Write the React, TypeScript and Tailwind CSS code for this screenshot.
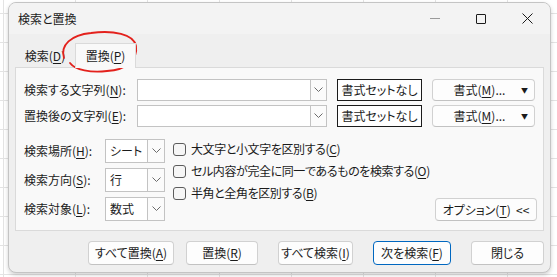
import { ReactNode } from 'react';

// Small chevron used in the combo boxes
function Chevron() {
    return (
        <svg width="9" height="6" viewBox="0 0 9 6" className="text-[#6b6b6b]">
            <polyline points="0.5,0.5 4.5,4.5 8.5,0.5" fill="none" stroke="currentColor" strokeWidth="1" />
        </svg>
    );
}

function Combo({ value, width, height, arrowW }: { value?: string; width: string; height: string; arrowW: string }) {
    return (
        <div className={`${width} ${height} flex bg-white border border-[#c3c3c3]`}>
            <div className="flex-1 flex items-center pl-[4px] text-[12px] text-[#1b1b1b]">{value}</div>
            <div className={`${arrowW} flex items-center justify-center border-l border-[#c3c3c3] bg-[#fbfbfb]`}>
                <Chevron />
            </div>
        </div>
    );
}

function Key({ children }: { children: ReactNode }) {
    return <u className="underline underline-offset-[2px] decoration-1">{children}</u>;
}

function Btn({ children, className = '' }: { children: ReactNode; className?: string }) {
    return (
        <div className={`h-[24px] flex items-center justify-center whitespace-nowrap rounded-[4px] border border-[#d1d1d1] border-b-[#c2c2c2] bg-[#fdfdfd] text-[12px] text-[#1b1b1b] ${className}`}>
            {children}
        </div>
    );
}

function CheckRow({ children }: { children: ReactNode }) {
    return (
        <div className="h-[22px] flex items-center gap-[5px] whitespace-nowrap">
            <div className="w-[13px] h-[13px] rounded-[3px] border border-[#5c5c5c] bg-[#f6f6f6]" />
            <span className="text-[12px] text-[#1b1b1b] tracking-[-0.4px]">{children}</span>
        </div>
    );
}

export default function App() {
    return (
        <div className="relative w-[557px] h-[277px] overflow-hidden bg-white pl-[8px] pt-[2px] font-['Noto_Sans_CJK_JP','Noto_Sans',sans-serif] [font-feature-settings:'palt'] bg-[linear-gradient(to_right,#e3e3e3_1px,transparent_1px),linear-gradient(to_bottom,#e3e3e3_1px,transparent_1px)] [background-size:72px_29px] [background-position:3px_13px]">
            <div className="relative w-[543px] h-[271px] flex flex-col rounded-[8px] border border-[#c4c4c4] bg-[#efefef] shadow-[0_2px_4px_rgba(0,0,0,0.18)] overflow-hidden">

                {/* Title bar */}
                <div className="h-[31px] flex items-center bg-[#f3f3f3] pl-[9px]">
                    <span className="text-[12px] text-[#1b1b1b]">検索と置換</span>
                    <div className="ml-auto flex items-center h-full">
                        <div className="w-[46px] flex justify-center">
                            <div className="w-[10px] h-px bg-[#9a9a9a]" />
                        </div>
                        <div className="w-[46px] flex justify-center">
                            <div className="w-[10px] h-[10px] border border-[#1b1b1b] rounded-[1px]" />
                        </div>
                        <div className="w-[46px] flex justify-center">
                            <svg width="11" height="11" viewBox="0 0 11 11">
                                <path d="M0.5 0.5 L10.5 10.5 M10.5 0.5 L0.5 10.5" stroke="#1b1b1b" strokeWidth="1" />
                            </svg>
                        </div>
                    </div>
                </div>

                <div className="flex flex-col px-[6px] pt-[8px]">
                    {/* Tabs */}
                    <div className="flex items-end h-[25px]">
                        <div className="w-[60px] h-[22px] flex items-center justify-center text-[12px] text-[#1b1b1b]">
                            検索(<Key>D</Key>)
                        </div>
                        <div className="w-[61px] h-[25px] -mb-px relative z-10 flex items-center justify-center bg-[#f9f9f9] border border-b-0 border-[#dadada] text-[12px] text-[#1b1b1b]">
                            置換(<Key>P</Key>)
                        </div>
                    </div>

                    {/* Panel */}
                    <div className="h-[164px] flex flex-col bg-[#f9f9f9] border border-[#dadada] pl-[8px] pr-[6px] pt-[11px]">
                        <div className="flex items-center h-[22px]">
                            <span className="w-[113px] text-[12px] text-[#1b1b1b] whitespace-nowrap">検索する文字列(<Key>N</Key>):</span>
                            <Combo width="w-[190px]" height="h-[22px]" arrowW="w-[16px]" />
                            <div className="ml-[10px] w-[85px] h-[22px] flex items-center justify-center bg-white border border-[#1b1b1b] text-[12px] text-[#1b1b1b] whitespace-nowrap">書式セットなし</div>
                            <Btn className="ml-[10px] w-[103px] !h-[22px] relative">
                                <span className="-ml-[8px]">書式(<Key>M</Key>)...</span>
                                <span className="absolute right-[6px] top-[5px] text-[7px]">▼</span>
                            </Btn>
                        </div>
                        <div className="flex items-center h-[22px] mt-[4px]">
                            <span className="w-[113px] text-[12px] text-[#1b1b1b] whitespace-nowrap">置換後の文字列(<Key>E</Key>):</span>
                            <Combo width="w-[190px]" height="h-[22px]" arrowW="w-[16px]" />
                            <div className="ml-[10px] w-[85px] h-[22px] flex items-center justify-center bg-white border border-[#1b1b1b] text-[12px] text-[#1b1b1b] whitespace-nowrap">書式セットなし</div>
                            <Btn className="ml-[10px] w-[103px] !h-[22px] relative">
                                <span className="-ml-[8px]">書式(<Key>M</Key>)...</span>
                                <span className="absolute right-[6px] top-[5px] text-[7px]">▼</span>
                            </Btn>
                        </div>

                        {/* Options */}
                        <div className="flex mt-[12px]">
                            <div className="flex flex-col gap-[5px]">
                                <div className="flex items-center">
                                    <span className="w-[81px] text-[12px] text-[#1b1b1b] whitespace-nowrap">検索場所(<Key>H</Key>):</span>
                                    <Combo value="シート" width="w-[60px]" height="h-[24px]" arrowW="w-[17px]" />
                                </div>
                                <div className="flex items-center">
                                    <span className="w-[81px] text-[12px] text-[#1b1b1b] whitespace-nowrap">検索方向(<Key>S</Key>):</span>
                                    <Combo value="行" width="w-[60px]" height="h-[24px]" arrowW="w-[17px]" />
                                </div>
                                <div className="flex items-center">
                                    <span className="w-[81px] text-[12px] text-[#1b1b1b] whitespace-nowrap">検索対象(<Key>L</Key>):</span>
                                    <Combo value="数式" width="w-[60px]" height="h-[24px]" arrowW="w-[17px]" />
                                </div>
                            </div>
                            <div className="flex flex-col ml-[8px] -mt-px">
                                <CheckRow>大文字と小文字を区別する(<Key>C</Key>)</CheckRow>
                                <CheckRow>セル内容が完全に同一であるものを検索する(<Key>O</Key>)</CheckRow>
                                <CheckRow>半角と全角を区別する(<Key>B</Key>)</CheckRow>
                            </div>
                            <Btn className="ml-auto self-end w-[102px] !h-[23px]">
                                オプション(<Key>T</Key>)&nbsp;&nbsp;&lt;&lt;
                            </Btn>
                        </div>
                    </div>

                    {/* Bottom buttons */}
                    <div className="flex justify-end mt-[10px]">
                        <Btn className="w-[86px]">すべて置換(<Key>A</Key>)</Btn>
                        <Btn className="w-[72px] ml-[12px]">置換(<Key>R</Key>)</Btn>
                        <Btn className="w-[75px] ml-[20px]">すべて検索(<Key>I</Key>)</Btn>
                        <Btn className="w-[78px] ml-[20px] !border-[#0067c0]">次を検索(<Key>F</Key>)</Btn>
                        <Btn className="w-[73px] ml-[20px]">閉じる</Btn>
                    </div>
                </div>

                {/* Hand-drawn red mark around the active tab */}
                <svg className="absolute left-0 top-0 pointer-events-none" width="543" height="80" viewBox="0 0 543 80">
                    <path
                        d="M55 55 C51 42 62 32 82 30 C104 27 125 31 127 43 C129 56 118 67 98 68 C82 70 66 67 61 60"
                        fill="none"
                        stroke="#e3211c"
                        strokeWidth="1.8"
                        strokeLinecap="round"
                    />
                </svg>
            </div>
        </div>
    );
}
